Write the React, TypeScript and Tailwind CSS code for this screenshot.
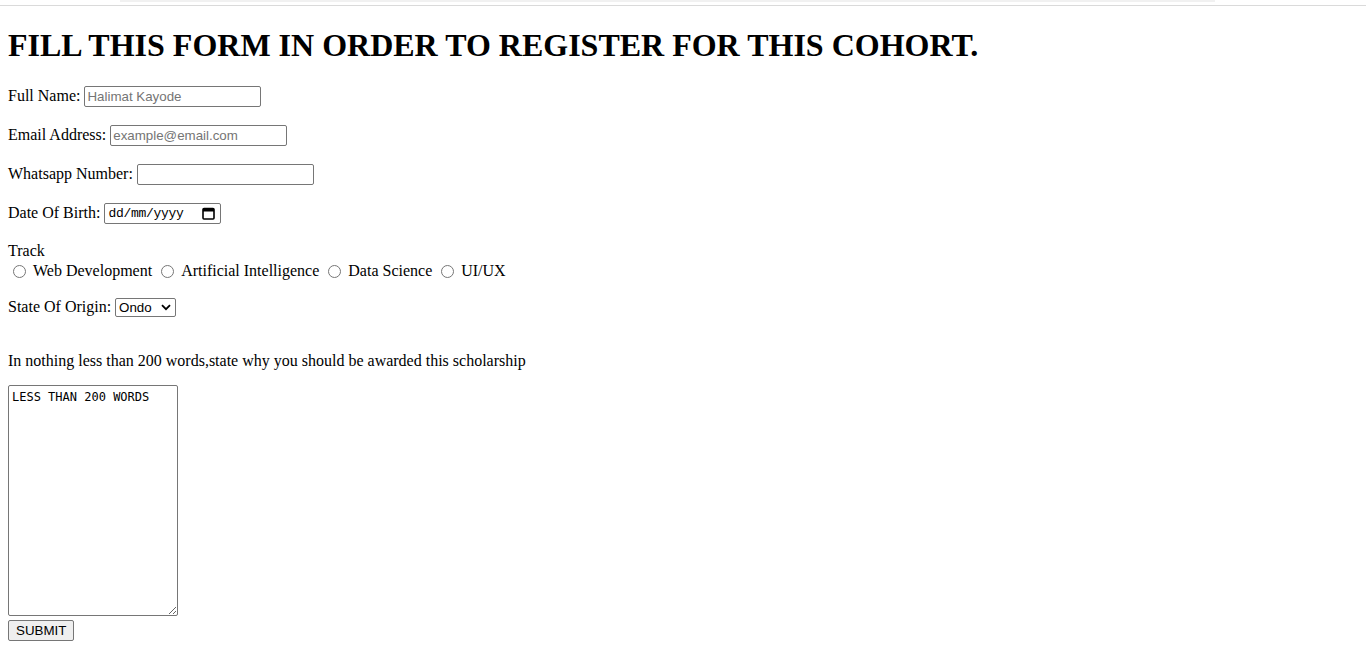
import React from "react";

const serif = "font-['Liberation_Serif','Times_New_Roman',serif]";
const sans = "font-['Liberation_Sans',Arial,sans-serif]";

function TextInput({ placeholder }: { placeholder?: string }) {
  return (
    <input
      type="text"
      placeholder={placeholder}
      className={`${sans} w-[177px] h-[21px] border border-[#767676] rounded-[2px] px-[2px] text-[13.333px] text-black placeholder:text-[#757575] bg-white outline-none`}
    />
  );
}

export default function App() {
  return (
    <div className={`${serif} bg-white text-black min-h-[650px] w-[1366px] overflow-hidden text-[16px]`}>
      <div className="h-[5px] flex justify-start">
        <div className="ml-[120px] w-[1095px] h-[2px] bg-[#f1f1f1]" />
      </div>
      <div className="h-px bg-[#dadada]" />
      <div className="px-[8px]">
        <h1 className="mt-[21px] text-[32px] leading-[37px] font-bold">
          FILL THIS FORM IN ORDER TO REGISTER FOR THIS COHORT.
        </h1>

        <div className="mt-[22px] flex flex-col gap-[18px]">
          <div className="h-[21px] flex items-center gap-[4px]">
            <span className="-mt-px">Full Name:</span>
            <TextInput placeholder="Halimat Kayode" />
          </div>
          <div className="h-[21px] flex items-center gap-[4px]">
            <span className="-mt-px">Email Address:</span>
            <TextInput placeholder="example@email.com" />
          </div>
          <div className="h-[21px] flex items-center gap-[4px]">
            <span className="-mt-px">Whatsapp Number:</span>
            <TextInput />
          </div>
          <div className="h-[21px] flex items-center gap-[4px]">
            <span className="-mt-px">Date Of Birth:</span>
            <div className="w-[117px] h-[21px] border border-[#767676] rounded-[2px] flex items-center justify-between pl-[3px] pr-[5px]">
              <span className="font-['Liberation_Mono','DejaVu_Sans_Mono',monospace] text-[13px] leading-none tracking-[-0.3px]">
                dd/mm/yyyy
              </span>
              <svg width="13" height="13" viewBox="0 0 13 13">
                <rect x="1" y="1.5" width="11" height="10.5" rx="1" fill="none" stroke="#000" strokeWidth="1.6" />
                <rect x="1" y="1.5" width="11" height="3" fill="#000" />
              </svg>
            </div>
          </div>
        </div>

        <div className="mt-[18px] leading-[18px]">
          <div>Track</div>
          <div className="flex items-center h-[22px]">
            <input type="radio" name="track" className="ml-[5px] mr-[3px] w-[13px] h-[13px]" />
            <span className="ml-[4px]">Web Development</span>
            <input type="radio" name="track" className="ml-[9px] mr-[3px] w-[13px] h-[13px]" />
            <span className="ml-[4px]">Artificial Intelligence</span>
            <input type="radio" name="track" className="ml-[9px] mr-[3px] w-[13px] h-[13px]" />
            <span className="ml-[4px]">Data Science</span>
            <input type="radio" name="track" className="ml-[9px] mr-[3px] w-[13px] h-[13px]" />
            <span className="ml-[4px]">UI/UX</span>
          </div>
        </div>

        <div className="mt-[16px] h-[19px] flex items-center gap-[4px]">
          <span className="-mt-px">State Of Origin:</span>
          <div className={`${sans} w-[61px] h-[19px] border border-[#767676] rounded-[2px] flex items-center justify-between pl-[3px] pr-[4px] text-[13.333px]`}>
            <span>Ondo</span>
            <svg width="10" height="7" viewBox="0 0 10 7">
              <path d="M1 1.2 L5 5.2 L9 1.2" fill="none" stroke="#000" strokeWidth="1.8" />
            </svg>
          </div>
        </div>

        <p className="mt-[35px] leading-[18px]">
          In nothing less than 200 words,state why you should be awarded this scholarship
        </p>

        <textarea
          defaultValue="LESS THAN 200 WORDS"
          className="mt-[15px] block w-[170px] h-[231px] border border-[#767676] rounded-[2px] px-[3px] pt-[3px] pb-[2px] font-['DejaVu_Sans_Mono','Liberation_Mono',monospace] text-[12px] leading-[16px] outline-none resize"
        />

        <button
          type="button"
          className={`${sans} mt-[4px] block h-[21px] px-[7px] border border-[#767676] rounded-[2px] bg-[#efefef] text-[13.333px] leading-none text-black`}
        >
          SUBMIT
        </button>
      </div>
    </div>
  );
}
